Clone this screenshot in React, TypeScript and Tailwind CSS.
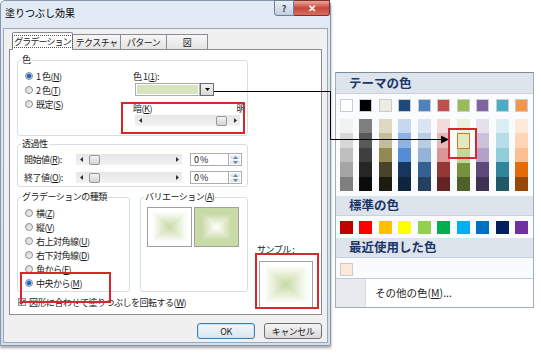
import React from 'react'

const themeTop = ['#ffffff', '#000000', '#eeece1', '#1f497d', '#4f81bd', '#c0504d', '#9bbb59', '#8064a2', '#4bacc6', '#f79646']
const tints = [
  ['#f2f2f2', '#d8d8d8', '#bfbfbf', '#a5a5a5', '#7f7f7f'],
  ['#7f7f7f', '#595959', '#3f3f3f', '#262626', '#0c0c0c'],
  ['#ddd9c3', '#c4bd97', '#938953', '#494429', '#1d1b10'],
  ['#c6d9f0', '#8db3e2', '#548dd4', '#17365d', '#0f243e'],
  ['#dbe5f1', '#b8cce4', '#95b3d7', '#366092', '#244061'],
  ['#f2dcdb', '#e5b9b7', '#d99694', '#953734', '#632423'],
  ['#ebf1dd', '#d7e3bc', '#c3d69b', '#76923c', '#4f6128'],
  ['#e5e0ec', '#ccc1d9', '#b2a2c7', '#5f497a', '#3f3151'],
  ['#dbeef3', '#b7dde8', '#92cddc', '#31859b', '#205867'],
  ['#fdeada', '#fbd5b5', '#fac08f', '#e36c09', '#974806'],
]
const standard = ['#c00000', '#ff0000', '#ffc000', '#ffff00', '#92d050', '#00b050', '#00b0f0', '#0070c0', '#002060', '#7030a0']

const U = ({ children }: { children: React.ReactNode }) => <span className="underline underline-offset-1">{children}</span>

const Radio = ({ on }: { on?: boolean }) => (
  <span className="w-[8px] h-[8px] rounded-full border border-[#8e8f8f] bg-gradient-to-br from-[#d4d4d4] to-[#f4f4f4] flex items-center justify-center shrink-0">
    {on && <span className="w-[4px] h-[4px] rounded-full bg-[#1f5fae] shadow-[0_0_0_1px_#7fb2e5]" />}
  </span>
)

const RadioRow = ({ on, label, k }: { on?: boolean; label: string; k: string }) => (
  <div className="flex items-center h-[14px] gap-[3px]">
    <Radio on={on} />
    <span>
      {label}(<U>{k}</U>)
    </span>
  </div>
)

const Arrow = ({ right }: { right?: boolean }) => (
  <div className="w-[10px] h-full flex items-center justify-center shrink-0">
    <svg width="3" height="5" viewBox="0 0 3 5">
      <polygon points={right ? '0,0 3,2.5 0,5' : '3,0 0,2.5 3,5'} fill="#303030" />
    </svg>
  </div>
)

const Thumb = () => (
  <div className="w-[11px] h-[10px] rounded-[2px] border border-[#979797] bg-gradient-to-b from-[#f4f4f4] to-[#d4d4d4]" />
)

const Spin = () => (
  <div className="flex h-[13px]">
    <div className="w-[39px] border border-[#abadb3] bg-white pl-[3px] flex items-center">0 %</div>
    <div className="w-[13px] flex flex-col border border-l-0 border-[#abadb3] bg-white p-px gap-px">
      <div className="flex-1 rounded-[1px] bg-gradient-to-b from-[#eef3f8] to-[#d6e2ee] flex items-center justify-center">
        <svg width="5" height="3" viewBox="0 0 5 3">
          <polygon points="0,3 5,3 2.5,0" fill="#6f849c" />
        </svg>
      </div>
      <div className="flex-1 rounded-[1px] bg-gradient-to-b from-[#eef3f8] to-[#d6e2ee] flex items-center justify-center">
        <svg width="5" height="3" viewBox="0 0 5 3">
          <polygon points="0,0 5,0 2.5,3" fill="#6f849c" />
        </svg>
      </div>
    </div>
  </div>
)

const Group = ({ title, className, children }: { title: React.ReactNode; className: string; children: React.ReactNode }) => (
  <fieldset className={`border border-[#d5dfe5] rounded-[3px] ${className}`}>
    <legend className="ml-[3px] px-[1px] leading-[12px] whitespace-nowrap">{title}</legend>
    {children}
  </fieldset>
)

const Dialog = () => (
  <div className="w-[331px] h-[346px] shrink-0 flex flex-col border border-[#8796aa] rounded-t-[5px] bg-gradient-to-b from-[#e2ebf5] to-[#d2deec] shadow-[0_2px_3px_rgba(0,0,0,0.35)] tracking-[-0.5px] whitespace-nowrap">
    <div className="h-[27px] relative flex items-center pl-[4px] pb-[4px] text-[10px] text-black tracking-normal">
      塗りつぶし効果
      <div className="absolute right-0 top-[-1px] flex">
        <div className="w-[20px] h-[16px] border border-[#6f7e93] rounded-bl-[3px] bg-gradient-to-b from-[#e9eff6] to-[#c3cfdd] flex items-center justify-center text-[9px] font-bold text-[#3a4454]">
          ?
        </div>
        <div className="w-[36px] h-[16px] border border-l-0 border-[#7a3129] rounded-br-[3px] bg-gradient-to-b from-[#e7a89d] via-[#c7453a] to-[#d86d5f] flex items-center justify-center text-[10px] font-bold text-white">
          ✕
        </div>
      </div>
    </div>
    <div className="flex-1 mx-[2px] mb-[2px] bg-[#f0f0f0] border border-[#9aa8b8] flex flex-col pl-[5px] pr-[5px] pt-[3px]">
      <div className="h-[17px] flex items-end pl-[3px]">
        <div className="relative z-10 -mb-px h-[18px] w-[61px] border border-b-0 border-[#898c95] rounded-t-[2px] bg-white flex items-center justify-center">
          <span className="border border-dotted border-[#555] px-[1px] leading-[11px] tracking-[-0.9px]">グラデーション</span>
        </div>
        <div className="h-[15px] w-[48px] border border-b-0 border-l-0 border-[#898c95] bg-gradient-to-b from-[#f6f6f6] to-[#e4e4e4] flex items-center justify-center">
          テクスチャ
        </div>
        <div className="h-[15px] w-[46px] border border-b-0 border-l-0 border-[#898c95] bg-gradient-to-b from-[#f6f6f6] to-[#e4e4e4] flex items-center justify-center">
          パターン
        </div>
        <div className="h-[15px] w-[41px] border border-b-0 border-l-0 border-[#898c95] bg-gradient-to-b from-[#f6f6f6] to-[#e4e4e4] flex items-center justify-center">
          図
        </div>
      </div>
      <div className="h-[266px] border border-[#898c95] bg-white flex">
        <div className="w-[238px] pl-[7px] pt-[4px] flex flex-col shrink-0">
          <Group title="色" className="h-[82px] w-[231px]">
            <div className="flex">
              <div className="w-[115px] pl-[7px] pt-[3px]">
                <RadioRow on label="1 色" k="N" />
                <RadioRow label="2 色" k="T" />
                <RadioRow label="既定" k="S" />
              </div>
              <div className="w-[112px] pt-[4px]">
                <div className="h-[12px] flex items-center">
                  色 1(<U>1</U>):
                </div>
                <div className="mt-[1px] ml-[2px] flex h-[13px]">
                  <div className="w-[65px] border border-[#abadb3] bg-white p-px">
                    <div className="h-full bg-[#d7e4bd]" />
                  </div>
                  <div className="w-[14px] border border-[#6d6d6d] bg-gradient-to-b from-[#f3f3f3] to-[#d9d9d9] flex items-center justify-center">
                    <svg width="5" height="3" viewBox="0 0 5 3">
                      <polygon points="0,0 5,0 2.5,3" fill="#111" />
                    </svg>
                  </div>
                </div>
                <div className="mt-[6px] h-[12px] flex items-center justify-between">
                  <span>
                    暗(<U>K</U>)
                  </span>
                  <span>明</span>
                </div>
                <div className="mt-px ml-[2px] w-[105px] h-[11px] bg-gradient-to-b from-[#e6e6e6] to-[#f2f2f2] flex">
                  <Arrow />
                  <div className="flex-1 flex items-center justify-end pr-[3px]">
                    <Thumb />
                  </div>
                  <Arrow right />
                </div>
              </div>
            </div>
          </Group>
          <Group title="透過性" className="mt-[2px] h-[49px] w-[231px]">
            <div className="pl-[6px] pt-[3px] flex flex-col gap-[5px]">
              {[
                ['開始値', 'R'],
                ['終了値', 'O'],
              ].map(([l, k]) => (
                <div key={k} className="flex items-center h-[13px]">
                  <span className="w-[52px]">
                    {l}(<U>{k}</U>):
                  </span>
                  <div className="w-[106px] h-[11px] bg-gradient-to-b from-[#e6e6e6] to-[#f2f2f2] flex">
                    <Arrow />
                    <div className="flex-1 flex items-center pl-[3px]">
                      <Thumb />
                    </div>
                    <Arrow right />
                  </div>
                  <div className="ml-[8px]">
                    <Spin />
                  </div>
                </div>
              ))}
            </div>
          </Group>
          <div className="mt-[4px] flex gap-[10px]">
            <Group title="グラデーションの種類" className="h-[101px] w-[113px]">
              <div className="pl-[7px] pt-[3px]">
                <RadioRow label="横" k="Z" />
                <RadioRow label="縦" k="V" />
                <RadioRow label="右上対角線" k="U" />
                <RadioRow label="右下対角線" k="D" />
                <RadioRow label="角から" k="F" />
                <RadioRow on label="中央から" k="M" />
              </div>
            </Group>
            <Group
              title={
                <>
                  バリエーション(<U>A</U>)
                </>
              }
              className="h-[101px] w-[108px]"
            >
              <div className="pl-[6px] pt-[4px] flex gap-[2px]">
                <div className="w-[45px] h-[40px] border border-[#a0a0a0] bg-[linear-gradient(to_right,#fff_10%,#c8daa6_50%,#fff_90%),linear-gradient(to_bottom,#fff_10%,#c8daa6_50%,#fff_90%)] bg-blend-lighten" />
                <div className="w-[45px] h-[40px] border border-[#a0a0a0] bg-[linear-gradient(to_right,#c8daa6_15%,#fff_50%,#c8daa6_85%),linear-gradient(to_bottom,#c8daa6_15%,#fff_50%,#c8daa6_85%)] bg-blend-darken" />
              </div>
            </Group>
          </div>
          <div className="mt-[4px] h-[12px] flex items-center gap-[3px] pl-px">
            <div className="w-[8px] h-[8px] border border-[#8e8f8f] bg-gradient-to-br from-[#dcdcdc] to-[#f6f6f6] flex items-center justify-center">
              <svg width="6" height="6" viewBox="0 0 6 6">
                <polyline points="0.5,3 2.3,5 5.5,0.8" fill="none" stroke="#2b4d7a" strokeWidth="1.3" />
              </svg>
            </div>
            <span>
              図形に合わせて塗りつぶしを回転する(<U>W</U>)
            </span>
          </div>
        </div>
        <div className="flex-1 flex flex-col justify-end pb-[6px] pl-[9px]">
          <div className="h-[12px]">サンプル :</div>
          <div className="mt-[4px] ml-[2px] w-[54px] h-[47px] border border-[#a0a0a0] bg-[linear-gradient(to_right,#fff_8%,#c8daa6_50%,#fff_92%),linear-gradient(to_bottom,#fff_8%,#c8daa6_50%,#fff_92%)] bg-blend-lighten" />
        </div>
      </div>
      <div className="mt-[8px] flex justify-end gap-[9px]">
        <div className="w-[58px] h-[16px] rounded-[3px] border border-[#3c7fb1] bg-gradient-to-b from-[#f2f7fb] to-[#d9e6f0] shadow-[inset_0_0_0_1px_#c5e4f7] flex items-center justify-center">
          OK
        </div>
        <div className="w-[58px] h-[16px] rounded-[3px] border border-[#707070] bg-gradient-to-b from-[#f4f4f4] to-[#dadada] flex items-center justify-center">
          キャンセル
        </div>
      </div>
    </div>
  </div>
)

const Header = ({ children }: { children: React.ReactNode }) => (
  <div className="h-[20px] bg-[#dde4ec] border-b border-[#c8d1dc] flex items-center pl-[13px] text-[12.5px] font-bold text-[#1b3568]">
    {children}
  </div>
)

const Swatch = ({ c, className = '' }: { c: string; className?: string }) => (
  <div className={`w-[13px] h-[13px] border border-[#c9ccd1] ${className}`} style={{ backgroundColor: c }} />
)

const Palette = () => (
  <div className="ml-[4px] mt-[72px] w-[199px] h-[236px] shrink-0 border border-[#9eadc1] border-t-[#7f8a99] bg-[#fafbfc] flex flex-col">
    <div className="h-[21px] bg-[#dde4ec] border-b border-[#c8d1dc] flex items-center pl-[13px] text-[12.5px] font-bold text-[#1b3568]">
      テーマの色
    </div>
    <div className="mt-[5px] pl-[4px] pr-[5px] flex justify-between">
      {themeTop.map((c) => (
        <Swatch key={c} c={c} />
      ))}
    </div>
    <div className="mt-[7px] pl-[4px] pr-[5px] flex justify-between">
      {tints.map((col, i) => (
        <div key={i} className="w-[13px] h-[72px] flex flex-col">
          {col.map((c, j) =>
            i === 6 && j === 1 ? (
              <div key={j} className="flex-1 border border-[#c57a2c] shadow-[inset_0_0_0_1px_#fbe3a4] bg-[#dfe9c6]" />
            ) : (
              <div key={j} className="flex-1" style={{ backgroundColor: c }} />
            ),
          )}
        </div>
      ))}
    </div>
    <div className="mt-[5px]">
      <Header>標準の色</Header>
    </div>
    <div className="mt-[5px] pl-[4px] pr-[5px] flex justify-between">
      {standard.map((c) => (
        <Swatch key={c} c={c} className="border-transparent" />
      ))}
    </div>
    <div className="mt-[4px]">
      <Header>最近使用した色</Header>
    </div>
    <div className="mt-[5px] pl-[4px]">
      <Swatch c="#fde9d9" />
    </div>
    <div className="mt-[2px] h-px bg-[#c5cbd3]" />
    <div className="flex-1 flex bg-white">
      <div className="w-[30px] bg-[#e7eaee] border-r border-[#d6dbe1]" />
      <div className="pl-[9px] flex items-center text-[10.5px] text-[#1e1e1e]">
        その他の色(<U>M</U>)...
      </div>
    </div>
  </div>
)

export default function App() {
  return (
    <div className="relative w-[541px] h-[360px] bg-white overflow-hidden flex items-start font-['Noto_Sans_CJK_JP',sans-serif] text-[9px] leading-none text-[#1a1a1a]">
      <Dialog />
      <Palette />
      <svg className="absolute left-0 top-0 pointer-events-none" width="541" height="360">
        <path d="M214 91.5 H330.5 V139.5 H442" fill="none" stroke="#000" strokeWidth="1" />
        <polygon points="441,135.5 449,139.5 441,143.5" fill="#000" />
      </svg>
      <div className="absolute left-[121px] top-[102px] w-[124px] h-[32px] border-2 border-[#d9262c]" />
      <div className="absolute left-[20px] top-[272px] w-[91px] h-[31px] border-2 border-[#d9262c]" />
      <div className="absolute left-[255px] top-[253px] w-[64px] h-[56px] border-2 border-[#d9262c]" />
      <div className="absolute left-[448px] top-[128px] w-[29px] h-[31px] border-2 border-[#d9262c]" />
    </div>
  )
}
